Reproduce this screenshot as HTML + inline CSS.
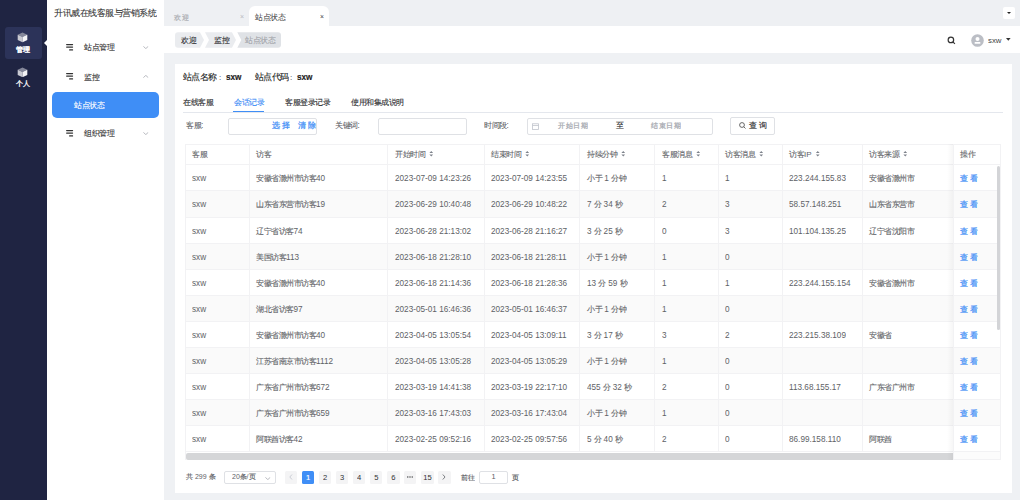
<!DOCTYPE html><html><head><meta charset="utf-8"><style>
*{box-sizing:border-box;margin:0;padding:0}
html,body{width:1020px;height:500px;overflow:hidden;background:#eff1f4;font-family:"Liberation Sans",sans-serif;color:#333}
.a{position:absolute;white-space:nowrap}
.t{position:absolute;white-space:nowrap;line-height:1;transform:scale(0.5);transform-origin:0 0}
.sort{display:inline-block;vertical-align:middle;margin-left:8px;position:relative;top:-1px}
</style></head><body>
<div class="a" style="left:0;top:0;width:47px;height:500px;background:#1f2442"></div>
<div class="a" style="left:4.5px;top:26.5px;width:37px;height:32px;background:#2c3359;border-radius:3px"></div>
<div class="a" style="left:43.8px;top:39.8px;width:0;height:0;border-top:3px solid transparent;border-bottom:3px solid transparent;border-right:3.2px solid #fff"></div>
<svg style="position:absolute;left:17.4px;top:32.3px" width="11" height="10.5" viewBox="0 0 11 10.5">
<path d="M5.5 0.4L10.3 2.7L5.5 5L0.7 2.7Z" fill="#85889a"/>
<path d="M0.7 2.7L5.5 5L5.5 10.2L0.7 7.9Z" fill="#c9cad2"/>
<path d="M10.3 2.7L5.5 5L5.5 10.2L10.3 7.9Z" fill="#f4f4f6"/>
</svg>
<div class="t" style="left:15.9px;top:45.2px;font-size:16.4px;color:#fff;"><span style="font-size:14px;letter-spacing:0.6px;-webkit-text-stroke:0.9px #fff;">管理</span></div>
<svg style="position:absolute;left:17.4px;top:66.6px" width="11" height="10.5" viewBox="0 0 11 10.5">
<path d="M5.5 0.4L10.3 2.7L5.5 5L0.7 2.7Z" fill="#85889a"/>
<path d="M0.7 2.7L5.5 5L5.5 10.2L0.7 7.9Z" fill="#c9cad2"/>
<path d="M10.3 2.7L5.5 5L5.5 10.2L10.3 7.9Z" fill="#f4f4f6"/>
</svg>
<div class="t" style="left:16px;top:79px;font-size:16.4px;color:#fff;"><span style="font-size:14px;letter-spacing:0.6px;-webkit-text-stroke:0.6px #fff;">个人</span></div>
<div class="a" style="left:47px;top:0;width:117px;height:500px;background:#fff"></div>
<div class="t" style="left:54.2px;top:9px;font-size:16.4px;color:#333;"><span style="font-size:17.0px;letter-spacing:0px;-webkit-text-stroke:0.16px #333;">升讯威在线客服与营销系统</span></div>
<svg style="position:absolute;left:65.5px;top:43.8px" width="8" height="7" viewBox="0 0 8 7">
<path d="M0.6 0.6H6.6M0.6 3.1H6.6M3.6 5.9H6.6" stroke="#333" stroke-width="1.1" stroke-linecap="round"/>
</svg>
<div class="t" style="left:83.8px;top:42.5px;font-size:16.4px;color:#333;"><span style="font-size:15.0px;letter-spacing:0px;-webkit-text-stroke:0.2px #333;">站点管理</span></div>
<svg style="position:absolute;left:142.5px;top:45.8px" width="6" height="3.2" viewBox="0 0 6 3.2"><path d="M0.4 0.4L2.8 2.6L5.2 0.4" fill="none" stroke="#a0a3aa" stroke-width="0.75"/></svg>
<svg style="position:absolute;left:65.5px;top:73.3px" width="8" height="7" viewBox="0 0 8 7">
<path d="M0.6 0.6H6.6M0.6 3.1H6.6M3.6 5.9H6.6" stroke="#333" stroke-width="1.1" stroke-linecap="round"/>
</svg>
<div class="t" style="left:84px;top:72.5px;font-size:16.4px;color:#333;"><span style="font-size:15.0px;letter-spacing:0px;-webkit-text-stroke:0.2px #333;">监控</span></div>
<svg style="position:absolute;left:142.5px;top:75px" width="6" height="3.2" viewBox="0 0 6 3.2"><path d="M0.4 2.6L2.8 0.4L5.2 2.6" fill="none" stroke="#a0a3aa" stroke-width="0.75"/></svg>
<div class="a" style="left:52px;top:91.5px;width:107px;height:26.3px;background:#3f8ef6;border-radius:5px"></div>
<div class="t" style="left:73.6px;top:100.8px;font-size:16.4px;color:#fff;"><span style="font-size:15.0px;letter-spacing:0px;-webkit-text-stroke:0.2px #fff;">站点状态</span></div>
<svg style="position:absolute;left:65.5px;top:129.5px" width="8" height="7" viewBox="0 0 8 7">
<path d="M0.6 0.6H6.6M0.6 3.1H6.6M3.6 5.9H6.6" stroke="#333" stroke-width="1.1" stroke-linecap="round"/>
</svg>
<div class="t" style="left:84px;top:128.5px;font-size:16.4px;color:#333;"><span style="font-size:15.0px;letter-spacing:0px;-webkit-text-stroke:0.2px #333;">组织管理</span></div>
<svg style="position:absolute;left:142.5px;top:132px" width="6" height="3.2" viewBox="0 0 6 3.2"><path d="M0.4 0.4L2.8 2.6L5.2 0.4" fill="none" stroke="#a0a3aa" stroke-width="0.75"/></svg>
<div class="a" style="left:164px;top:0;width:856px;height:26px;background:#eef0f3"></div>
<div class="t" style="left:174px;top:12.8px;font-size:16.4px;color:#aeb0b5;"><span style="font-size:14px;letter-spacing:1.0px;-webkit-text-stroke:0.5px #aeb0b5;">欢迎</span></div>
<div class="t" style="left:240.2px;top:13px;font-size:14px;color:#b8bac0;">×</div>
<div class="a" style="left:248.6px;top:6px;width:80.8px;height:21px;background:#fff;border-radius:6px 6px 0 0"></div>
<div class="t" style="left:255.3px;top:12.8px;font-size:16.4px;color:#4a4a4a;"><span style="font-size:15.0px;letter-spacing:0px;-webkit-text-stroke:0.1px #4a4a4a;">站点状态</span></div>
<div class="t" style="left:319.6px;top:13.4px;font-size:13.6px;color:#444;">×</div>
<div class="a" style="left:1003px;top:7px;width:12px;height:12px;background:#fff;border-radius:2px"></div>
<div class="a" style="left:1007px;top:12.3px;width:0;height:0;border-left:2.2px solid transparent;border-right:2.2px solid transparent;border-top:2.4px solid #222"></div>
<div class="a" style="left:164px;top:26px;width:856px;height:27px;background:#fff"></div>
<svg class="a" style="left:174.7px;top:32.1px" width="110" height="16" viewBox="0 0 110 15.3"><path d="M3 0H25L29 7.65L25 15.3H3Q0 15.3 0 12.3V3Q0 0 3 0Z" fill="#eaecef"/><path d="M30 0H57L61 7.65L57 15.3H30L34 7.65Z" fill="#eaecef"/><path d="M62.3 0H103Q106 0 106 3V12.3Q106 15.3 103 15.3H62.3L66.3 7.65Z" fill="#dfe2e6"/></svg>
<div class="t" style="left:180.8px;top:35.8px;font-size:16.4px;color:#303133;"><span style="font-size:15.0px;letter-spacing:0px;-webkit-text-stroke:0.2px #303133;">欢迎</span></div>
<div class="t" style="left:213.5px;top:35.8px;font-size:16.4px;color:#303133;"><span style="font-size:15.0px;letter-spacing:0px;-webkit-text-stroke:0.2px #303133;">监控</span></div>
<div class="t" style="left:245.3px;top:35.8px;font-size:16.4px;color:#a3a5aa;"><span style="font-size:15.0px;letter-spacing:0px;-webkit-text-stroke:0.2px #a3a5aa;">站点状态</span></div>
<svg class="a" style="left:947px;top:36px" width="9" height="9" viewBox="0 0 9 9"><circle cx="3.9" cy="3.9" r="2.75" fill="none" stroke="#333" stroke-width="1.2"/><path d="M5.9 5.9L7.9 7.9" stroke="#333" stroke-width="1.2"/></svg>
<svg class="a" style="left:971px;top:33.6px" width="13" height="13" viewBox="0 0 13 13"><circle cx="6.5" cy="6.5" r="6.3" fill="#bbbec5"/><circle cx="6.5" cy="4.9" r="2" fill="#fff"/><rect x="3.6" y="7.9" width="5.8" height="1.9" rx="0.6" fill="#fff"/></svg>
<div class="t" style="left:988.4px;top:35.8px;font-size:15.6px;color:#444;">sxw</div>
<svg class="a" style="left:1005.5px;top:38.2px" width="5" height="3" viewBox="0 0 5 3"><path d="M0 0H4.6L2.3 2.7Z" fill="#333"/></svg>
<div class="a" style="left:175px;top:64px;width:836.5px;height:428.5px;background:#fff"></div>
<div class="t" style="left:183.2px;top:73.2px;font-size:16px;color:#222;"><span style="font-size:17.0px;letter-spacing:-0.4px;-webkit-text-stroke:0.2px #222;">站点名称</span></div>
<div class="t" style="left:218.6px;top:73.2px;font-size:16px;color:#333;">:</div>
<div class="t" style="left:225.6px;top:72.9px;font-size:16.4px;color:#222;-webkit-text-stroke:0.3px #222;"><b>sxw</b></div>
<div class="t" style="left:254.6px;top:73.2px;font-size:16px;color:#222;"><span style="font-size:17.0px;letter-spacing:-0.4px;-webkit-text-stroke:0.2px #222;">站点代码</span></div>
<div class="t" style="left:290px;top:73.2px;font-size:16px;color:#333;">:</div>
<div class="t" style="left:297.0px;top:72.9px;font-size:16.4px;color:#222;-webkit-text-stroke:0.3px #222;"><b>sxw</b></div>
<div class="t" style="left:183px;top:97.5px;font-size:16.4px;color:#303133;"><span style="font-size:15.0px;letter-spacing:0px;-webkit-text-stroke:0.24px #303133;">在线客服</span></div>
<div class="t" style="left:234px;top:97.5px;font-size:16.4px;color:#3f8ef6;"><span style="font-size:15.0px;letter-spacing:0px;-webkit-text-stroke:0.24px #3f8ef6;">会话记录</span></div>
<div class="t" style="left:285.4px;top:97.5px;font-size:16.4px;color:#303133;"><span style="font-size:15.0px;letter-spacing:0px;-webkit-text-stroke:0.24px #303133;">客服登录记录</span></div>
<div class="t" style="left:351px;top:97.5px;font-size:16.4px;color:#303133;"><span style="font-size:15.0px;letter-spacing:0px;-webkit-text-stroke:0.24px #303133;">使用和集成说明</span></div>
<div class="a" style="left:183px;top:111.6px;width:820px;height:1px;background:#e4e7ed"></div>
<div class="a" style="left:232.6px;top:111px;width:31.5px;height:1.3px;background:#3f8ef6"></div>
<div class="t" style="left:185.5px;top:121px;font-size:16.4px;color:#606266;"><span style="font-size:15.0px;letter-spacing:0px;-webkit-text-stroke:0.16px #606266;">客服</span>:</div>
<div class="a" style="left:228.3px;top:117.5px;width:89.2px;height:17px;border:1px solid #dfe1e5;border-radius:2px"></div>
<div class="t" style="left:272px;top:120.8px;font-size:16.4px;color:#3f8ef6;"><span style="font-size:15.0px;letter-spacing:0px;-webkit-text-stroke:0.5px #3f8ef6;">选</span> <span style="font-size:15.0px;letter-spacing:0px;-webkit-text-stroke:0.5px #3f8ef6;">择</span></div>
<div class="t" style="left:297.6px;top:120.8px;font-size:16.4px;color:#3f8ef6;"><span style="font-size:15.0px;letter-spacing:0px;-webkit-text-stroke:0.5px #3f8ef6;">清</span> <span style="font-size:15.0px;letter-spacing:0px;-webkit-text-stroke:0.5px #3f8ef6;">除</span></div>
<div class="t" style="left:334.6px;top:121px;font-size:16.4px;color:#606266;"><span style="font-size:15.0px;letter-spacing:0px;-webkit-text-stroke:0.16px #606266;">关键词</span>:</div>
<div class="a" style="left:378px;top:117.5px;width:89px;height:17px;border:1px solid #dfe1e5;border-radius:2px"></div>
<div class="t" style="left:484px;top:121px;font-size:16.4px;color:#606266;"><span style="font-size:15.0px;letter-spacing:0px;-webkit-text-stroke:0.16px #606266;">时间段</span>:</div>
<div class="a" style="left:526.6px;top:117.5px;width:186px;height:17px;border:1px solid #dfe1e5;border-radius:2px"></div>
<svg class="a" style="left:532px;top:122.5px" width="7" height="7" viewBox="0 0 7 7"><rect x="0.5" y="0.8" width="6" height="5.7" fill="none" stroke="#c0c4cc" stroke-width="0.8"/><path d="M0.5 2.5H6.5" stroke="#c0c4cc" stroke-width="0.8"/></svg>
<div class="t" style="left:558.4px;top:121px;font-size:16.4px;color:#a8abb2;"><span style="font-size:14px;letter-spacing:1.0px;-webkit-text-stroke:0.5px #a8abb2;">开始日期</span></div>
<div class="t" style="left:615.8px;top:121px;font-size:16.4px;color:#303133;"><span style="font-size:15.0px;letter-spacing:0px;-webkit-text-stroke:0.2px #303133;">至</span></div>
<div class="t" style="left:651px;top:121px;font-size:16.4px;color:#a8abb2;"><span style="font-size:14px;letter-spacing:1.0px;-webkit-text-stroke:0.5px #a8abb2;">结束日期</span></div>
<div class="a" style="left:730.4px;top:117.4px;width:44.2px;height:17.7px;border:1px solid #dfe1e5;border-radius:2px"></div>
<svg class="a" style="left:739px;top:122.3px" width="7" height="7" viewBox="0 0 7 7"><circle cx="3" cy="3" r="2.4" fill="none" stroke="#444" stroke-width="0.8"/><path d="M4.8 4.8L6.5 6.5" stroke="#444" stroke-width="0.8"/></svg>
<div class="t" style="left:749px;top:120.8px;font-size:16.4px;color:#303133;"><span style="font-size:15.0px;letter-spacing:0px;-webkit-text-stroke:0.3px #303133;">查</span> <span style="font-size:15.0px;letter-spacing:0px;-webkit-text-stroke:0.3px #303133;">询</span></div>
<div class="a" style="left:185px;top:144px;width:815.5px;height:20.8px;background:#fff"></div>
<div class="a" style="left:185px;top:164.80px;width:815.5px;height:26.1px;background:#fff"></div>
<div class="a" style="left:185px;top:190.90px;width:815.5px;height:26.1px;background:#fafafa"></div>
<div class="a" style="left:185px;top:217.00px;width:815.5px;height:26.1px;background:#fff"></div>
<div class="a" style="left:185px;top:243.10px;width:815.5px;height:26.1px;background:#fafafa"></div>
<div class="a" style="left:185px;top:269.20px;width:815.5px;height:26.1px;background:#fff"></div>
<div class="a" style="left:185px;top:295.30px;width:815.5px;height:26.1px;background:#fafafa"></div>
<div class="a" style="left:185px;top:321.40px;width:815.5px;height:26.1px;background:#fff"></div>
<div class="a" style="left:185px;top:347.50px;width:815.5px;height:26.1px;background:#fafafa"></div>
<div class="a" style="left:185px;top:373.60px;width:815.5px;height:26.1px;background:#fff"></div>
<div class="a" style="left:185px;top:399.70px;width:815.5px;height:26.1px;background:#fafafa"></div>
<div class="a" style="left:185px;top:425.80px;width:815.5px;height:26.1px;background:#fff"></div>
<div class="a" style="left:185px;top:143.50px;width:815.5px;height:1px;background:#f2f2f4"></div>
<div class="a" style="left:185px;top:164.30px;width:815.5px;height:1px;background:#f2f2f4"></div>
<div class="a" style="left:185px;top:190.40px;width:815.5px;height:1px;background:#f2f2f4"></div>
<div class="a" style="left:185px;top:216.50px;width:815.5px;height:1px;background:#f2f2f4"></div>
<div class="a" style="left:185px;top:242.60px;width:815.5px;height:1px;background:#f2f2f4"></div>
<div class="a" style="left:185px;top:268.70px;width:815.5px;height:1px;background:#f2f2f4"></div>
<div class="a" style="left:185px;top:294.80px;width:815.5px;height:1px;background:#f2f2f4"></div>
<div class="a" style="left:185px;top:320.90px;width:815.5px;height:1px;background:#f2f2f4"></div>
<div class="a" style="left:185px;top:347.00px;width:815.5px;height:1px;background:#f2f2f4"></div>
<div class="a" style="left:185px;top:373.10px;width:815.5px;height:1px;background:#f2f2f4"></div>
<div class="a" style="left:185px;top:399.20px;width:815.5px;height:1px;background:#f2f2f4"></div>
<div class="a" style="left:185px;top:425.30px;width:815.5px;height:1px;background:#f2f2f4"></div>
<div class="a" style="left:185px;top:451.40px;width:815.5px;height:1px;background:#f2f2f4"></div>
<div class="a" style="left:184.5px;top:144px;width:1px;height:307.90000000000003px;background:#f2f2f4"></div>
<div class="a" style="left:248.5px;top:144px;width:1px;height:307.90000000000003px;background:#f2f2f4"></div>
<div class="a" style="left:387.0px;top:144px;width:1px;height:307.90000000000003px;background:#f2f2f4"></div>
<div class="a" style="left:483.5px;top:144px;width:1px;height:307.90000000000003px;background:#f2f2f4"></div>
<div class="a" style="left:579.0px;top:144px;width:1px;height:307.90000000000003px;background:#f2f2f4"></div>
<div class="a" style="left:654.1px;top:144px;width:1px;height:307.90000000000003px;background:#f2f2f4"></div>
<div class="a" style="left:717.6px;top:144px;width:1px;height:307.90000000000003px;background:#f2f2f4"></div>
<div class="a" style="left:781.5px;top:144px;width:1px;height:307.90000000000003px;background:#f2f2f4"></div>
<div class="a" style="left:861.5px;top:144px;width:1px;height:307.90000000000003px;background:#f2f2f4"></div>
<div class="a" style="left:952.5px;top:144px;width:1px;height:307.90000000000003px;background:#f2f2f4"></div>
<div class="a" style="left:1000.0px;top:144px;width:1px;height:307.90000000000003px;background:#f2f2f4"></div>
<div class="t" style="left:192.2px;top:149.6px;font-size:16px;color:#606266;"><span style="font-size:15.0px;letter-spacing:0px;-webkit-text-stroke:0.16px #606266;">客服</span></div>
<div class="t" style="left:256.2px;top:149.6px;font-size:16px;color:#606266;"><span style="font-size:15.0px;letter-spacing:0px;-webkit-text-stroke:0.16px #606266;">访客</span></div>
<div class="t" style="left:394.7px;top:149.6px;font-size:16px;color:#606266;"><span style="font-size:15.0px;letter-spacing:0px;-webkit-text-stroke:0.16px #606266;">开始时间</span><svg class="sort" width="9" height="13" viewBox="0 0 4.5 6.5"><path d="M0.4 2.6L2.25 0.6L4.1 2.6Z M0.4 3.9L2.25 5.9L4.1 3.9Z" fill="#7d828b"/></svg></div>
<div class="t" style="left:491.2px;top:149.6px;font-size:16px;color:#606266;"><span style="font-size:15.0px;letter-spacing:0px;-webkit-text-stroke:0.16px #606266;">结束时间</span><svg class="sort" width="9" height="13" viewBox="0 0 4.5 6.5"><path d="M0.4 2.6L2.25 0.6L4.1 2.6Z M0.4 3.9L2.25 5.9L4.1 3.9Z" fill="#7d828b"/></svg></div>
<div class="t" style="left:586.7px;top:149.6px;font-size:16px;color:#606266;"><span style="font-size:15.0px;letter-spacing:0px;-webkit-text-stroke:0.16px #606266;">持续分钟</span><svg class="sort" width="9" height="13" viewBox="0 0 4.5 6.5"><path d="M0.4 2.6L2.25 0.6L4.1 2.6Z M0.4 3.9L2.25 5.9L4.1 3.9Z" fill="#7d828b"/></svg></div>
<div class="t" style="left:661.8px;top:149.6px;font-size:16px;color:#606266;"><span style="font-size:15.0px;letter-spacing:0px;-webkit-text-stroke:0.16px #606266;">客服消息</span><svg class="sort" width="9" height="13" viewBox="0 0 4.5 6.5"><path d="M0.4 2.6L2.25 0.6L4.1 2.6Z M0.4 3.9L2.25 5.9L4.1 3.9Z" fill="#7d828b"/></svg></div>
<div class="t" style="left:725.3px;top:149.6px;font-size:16px;color:#606266;"><span style="font-size:15.0px;letter-spacing:0px;-webkit-text-stroke:0.16px #606266;">访客消息</span><svg class="sort" width="9" height="13" viewBox="0 0 4.5 6.5"><path d="M0.4 2.6L2.25 0.6L4.1 2.6Z M0.4 3.9L2.25 5.9L4.1 3.9Z" fill="#7d828b"/></svg></div>
<div class="t" style="left:789.2px;top:149.6px;font-size:16px;color:#606266;"><span style="font-size:15.0px;letter-spacing:0px;-webkit-text-stroke:0.16px #606266;">访客</span>IP<svg class="sort" width="9" height="13" viewBox="0 0 4.5 6.5"><path d="M0.4 2.6L2.25 0.6L4.1 2.6Z M0.4 3.9L2.25 5.9L4.1 3.9Z" fill="#7d828b"/></svg></div>
<div class="t" style="left:869.2px;top:149.6px;font-size:16px;color:#606266;"><span style="font-size:15.0px;letter-spacing:0px;-webkit-text-stroke:0.16px #606266;">访客来源</span><svg class="sort" width="9" height="13" viewBox="0 0 4.5 6.5"><path d="M0.4 2.6L2.25 0.6L4.1 2.6Z M0.4 3.9L2.25 5.9L4.1 3.9Z" fill="#7d828b"/></svg></div>
<div class="t" style="left:960.2px;top:149.6px;font-size:16px;color:#606266;"><span style="font-size:15.0px;letter-spacing:0px;-webkit-text-stroke:0.16px #606266;">操作</span></div>
<div class="t" style="left:192.2px;top:174.3px;font-size:16.4px;color:#606266;">sxw</div>
<div class="t" style="left:256.2px;top:174.3px;font-size:16.4px;color:#606266;"><span style="font-size:15.0px;letter-spacing:0px;-webkit-text-stroke:0.2px #606266;">安徽省滁州市访客</span>40</div>
<div class="t" style="left:394.7px;top:174.3px;font-size:16.4px;color:#606266;">2023-07-09 14:23:26</div>
<div class="t" style="left:491.2px;top:174.3px;font-size:16.4px;color:#606266;">2023-07-09 14:23:55</div>
<div class="t" style="left:586.7px;top:174.3px;font-size:16.4px;color:#606266;"><span style="font-size:15.0px;letter-spacing:0px;-webkit-text-stroke:0.2px #606266;">小于</span> 1 <span style="font-size:15.0px;letter-spacing:0px;-webkit-text-stroke:0.2px #606266;">分钟</span></div>
<div class="t" style="left:661.8px;top:174.3px;font-size:16.4px;color:#606266;">1</div>
<div class="t" style="left:725.3px;top:174.3px;font-size:16.4px;color:#606266;">1</div>
<div class="t" style="left:789.2px;top:174.3px;font-size:16.4px;color:#606266;">223.244.155.83</div>
<div class="t" style="left:869.2px;top:174.3px;font-size:16.4px;color:#606266;"><span style="font-size:15.0px;letter-spacing:0px;-webkit-text-stroke:0.2px #606266;">安徽省滁州市</span></div>
<div class="t" style="left:960.2px;top:174.3px;font-size:16.4px;color:#3f8ef6;"><span style="font-size:15.0px;letter-spacing:0px;-webkit-text-stroke:0.4px #3f8ef6;">查</span> <span style="font-size:15.0px;letter-spacing:0px;-webkit-text-stroke:0.4px #3f8ef6;">看</span></div>
<div class="t" style="left:192.2px;top:200.4px;font-size:16.4px;color:#606266;">sxw</div>
<div class="t" style="left:256.2px;top:200.4px;font-size:16.4px;color:#606266;"><span style="font-size:15.0px;letter-spacing:0px;-webkit-text-stroke:0.2px #606266;">山东省东营市访客</span>19</div>
<div class="t" style="left:394.7px;top:200.4px;font-size:16.4px;color:#606266;">2023-06-29 10:40:48</div>
<div class="t" style="left:491.2px;top:200.4px;font-size:16.4px;color:#606266;">2023-06-29 10:48:22</div>
<div class="t" style="left:586.7px;top:200.4px;font-size:16.4px;color:#606266;">7 <span style="font-size:15.0px;letter-spacing:0px;-webkit-text-stroke:0.2px #606266;">分</span> 34 <span style="font-size:15.0px;letter-spacing:0px;-webkit-text-stroke:0.2px #606266;">秒</span></div>
<div class="t" style="left:661.8px;top:200.4px;font-size:16.4px;color:#606266;">2</div>
<div class="t" style="left:725.3px;top:200.4px;font-size:16.4px;color:#606266;">3</div>
<div class="t" style="left:789.2px;top:200.4px;font-size:16.4px;color:#606266;">58.57.148.251</div>
<div class="t" style="left:869.2px;top:200.4px;font-size:16.4px;color:#606266;"><span style="font-size:15.0px;letter-spacing:0px;-webkit-text-stroke:0.2px #606266;">山东省东营市</span></div>
<div class="t" style="left:960.2px;top:200.4px;font-size:16.4px;color:#3f8ef6;"><span style="font-size:15.0px;letter-spacing:0px;-webkit-text-stroke:0.4px #3f8ef6;">查</span> <span style="font-size:15.0px;letter-spacing:0px;-webkit-text-stroke:0.4px #3f8ef6;">看</span></div>
<div class="t" style="left:192.2px;top:226.5px;font-size:16.4px;color:#606266;">sxw</div>
<div class="t" style="left:256.2px;top:226.5px;font-size:16.4px;color:#606266;"><span style="font-size:15.0px;letter-spacing:0px;-webkit-text-stroke:0.2px #606266;">辽宁省访客</span>74</div>
<div class="t" style="left:394.7px;top:226.5px;font-size:16.4px;color:#606266;">2023-06-28 21:13:02</div>
<div class="t" style="left:491.2px;top:226.5px;font-size:16.4px;color:#606266;">2023-06-28 21:16:27</div>
<div class="t" style="left:586.7px;top:226.5px;font-size:16.4px;color:#606266;">3 <span style="font-size:15.0px;letter-spacing:0px;-webkit-text-stroke:0.2px #606266;">分</span> 25 <span style="font-size:15.0px;letter-spacing:0px;-webkit-text-stroke:0.2px #606266;">秒</span></div>
<div class="t" style="left:661.8px;top:226.5px;font-size:16.4px;color:#606266;">0</div>
<div class="t" style="left:725.3px;top:226.5px;font-size:16.4px;color:#606266;">3</div>
<div class="t" style="left:789.2px;top:226.5px;font-size:16.4px;color:#606266;">101.104.135.25</div>
<div class="t" style="left:869.2px;top:226.5px;font-size:16.4px;color:#606266;"><span style="font-size:15.0px;letter-spacing:0px;-webkit-text-stroke:0.2px #606266;">辽宁省沈阳市</span></div>
<div class="t" style="left:960.2px;top:226.5px;font-size:16.4px;color:#3f8ef6;"><span style="font-size:15.0px;letter-spacing:0px;-webkit-text-stroke:0.4px #3f8ef6;">查</span> <span style="font-size:15.0px;letter-spacing:0px;-webkit-text-stroke:0.4px #3f8ef6;">看</span></div>
<div class="t" style="left:192.2px;top:252.6px;font-size:16.4px;color:#606266;">sxw</div>
<div class="t" style="left:256.2px;top:252.6px;font-size:16.4px;color:#606266;"><span style="font-size:15.0px;letter-spacing:0px;-webkit-text-stroke:0.2px #606266;">美国访客</span>113</div>
<div class="t" style="left:394.7px;top:252.6px;font-size:16.4px;color:#606266;">2023-06-18 21:28:10</div>
<div class="t" style="left:491.2px;top:252.6px;font-size:16.4px;color:#606266;">2023-06-18 21:28:11</div>
<div class="t" style="left:586.7px;top:252.6px;font-size:16.4px;color:#606266;"><span style="font-size:15.0px;letter-spacing:0px;-webkit-text-stroke:0.2px #606266;">小于</span> 1 <span style="font-size:15.0px;letter-spacing:0px;-webkit-text-stroke:0.2px #606266;">分钟</span></div>
<div class="t" style="left:661.8px;top:252.6px;font-size:16.4px;color:#606266;">1</div>
<div class="t" style="left:725.3px;top:252.6px;font-size:16.4px;color:#606266;">0</div>
<div class="t" style="left:789.2px;top:252.6px;font-size:16.4px;color:#606266;"></div>
<div class="t" style="left:869.2px;top:252.6px;font-size:16.4px;color:#606266;"></div>
<div class="t" style="left:960.2px;top:252.6px;font-size:16.4px;color:#3f8ef6;"><span style="font-size:15.0px;letter-spacing:0px;-webkit-text-stroke:0.4px #3f8ef6;">查</span> <span style="font-size:15.0px;letter-spacing:0px;-webkit-text-stroke:0.4px #3f8ef6;">看</span></div>
<div class="t" style="left:192.2px;top:278.7px;font-size:16.4px;color:#606266;">sxw</div>
<div class="t" style="left:256.2px;top:278.7px;font-size:16.4px;color:#606266;"><span style="font-size:15.0px;letter-spacing:0px;-webkit-text-stroke:0.2px #606266;">安徽省滁州市访客</span>40</div>
<div class="t" style="left:394.7px;top:278.7px;font-size:16.4px;color:#606266;">2023-06-18 21:14:36</div>
<div class="t" style="left:491.2px;top:278.7px;font-size:16.4px;color:#606266;">2023-06-18 21:28:36</div>
<div class="t" style="left:586.7px;top:278.7px;font-size:16.4px;color:#606266;">13 <span style="font-size:15.0px;letter-spacing:0px;-webkit-text-stroke:0.2px #606266;">分</span> 59 <span style="font-size:15.0px;letter-spacing:0px;-webkit-text-stroke:0.2px #606266;">秒</span></div>
<div class="t" style="left:661.8px;top:278.7px;font-size:16.4px;color:#606266;">1</div>
<div class="t" style="left:725.3px;top:278.7px;font-size:16.4px;color:#606266;">1</div>
<div class="t" style="left:789.2px;top:278.7px;font-size:16.4px;color:#606266;">223.244.155.154</div>
<div class="t" style="left:869.2px;top:278.7px;font-size:16.4px;color:#606266;"><span style="font-size:15.0px;letter-spacing:0px;-webkit-text-stroke:0.2px #606266;">安徽省滁州市</span></div>
<div class="t" style="left:960.2px;top:278.7px;font-size:16.4px;color:#3f8ef6;"><span style="font-size:15.0px;letter-spacing:0px;-webkit-text-stroke:0.4px #3f8ef6;">查</span> <span style="font-size:15.0px;letter-spacing:0px;-webkit-text-stroke:0.4px #3f8ef6;">看</span></div>
<div class="t" style="left:192.2px;top:304.8px;font-size:16.4px;color:#606266;">sxw</div>
<div class="t" style="left:256.2px;top:304.8px;font-size:16.4px;color:#606266;"><span style="font-size:15.0px;letter-spacing:0px;-webkit-text-stroke:0.2px #606266;">湖北省访客</span>97</div>
<div class="t" style="left:394.7px;top:304.8px;font-size:16.4px;color:#606266;">2023-05-01 16:46:36</div>
<div class="t" style="left:491.2px;top:304.8px;font-size:16.4px;color:#606266;">2023-05-01 16:46:37</div>
<div class="t" style="left:586.7px;top:304.8px;font-size:16.4px;color:#606266;"><span style="font-size:15.0px;letter-spacing:0px;-webkit-text-stroke:0.2px #606266;">小于</span> 1 <span style="font-size:15.0px;letter-spacing:0px;-webkit-text-stroke:0.2px #606266;">分钟</span></div>
<div class="t" style="left:661.8px;top:304.8px;font-size:16.4px;color:#606266;">1</div>
<div class="t" style="left:725.3px;top:304.8px;font-size:16.4px;color:#606266;">0</div>
<div class="t" style="left:789.2px;top:304.8px;font-size:16.4px;color:#606266;"></div>
<div class="t" style="left:869.2px;top:304.8px;font-size:16.4px;color:#606266;"></div>
<div class="t" style="left:960.2px;top:304.8px;font-size:16.4px;color:#3f8ef6;"><span style="font-size:15.0px;letter-spacing:0px;-webkit-text-stroke:0.4px #3f8ef6;">查</span> <span style="font-size:15.0px;letter-spacing:0px;-webkit-text-stroke:0.4px #3f8ef6;">看</span></div>
<div class="t" style="left:192.2px;top:330.9px;font-size:16.4px;color:#606266;">sxw</div>
<div class="t" style="left:256.2px;top:330.9px;font-size:16.4px;color:#606266;"><span style="font-size:15.0px;letter-spacing:0px;-webkit-text-stroke:0.2px #606266;">安徽省滁州市访客</span>40</div>
<div class="t" style="left:394.7px;top:330.9px;font-size:16.4px;color:#606266;">2023-04-05 13:05:54</div>
<div class="t" style="left:491.2px;top:330.9px;font-size:16.4px;color:#606266;">2023-04-05 13:09:11</div>
<div class="t" style="left:586.7px;top:330.9px;font-size:16.4px;color:#606266;">3 <span style="font-size:15.0px;letter-spacing:0px;-webkit-text-stroke:0.2px #606266;">分</span> 17 <span style="font-size:15.0px;letter-spacing:0px;-webkit-text-stroke:0.2px #606266;">秒</span></div>
<div class="t" style="left:661.8px;top:330.9px;font-size:16.4px;color:#606266;">3</div>
<div class="t" style="left:725.3px;top:330.9px;font-size:16.4px;color:#606266;">2</div>
<div class="t" style="left:789.2px;top:330.9px;font-size:16.4px;color:#606266;">223.215.38.109</div>
<div class="t" style="left:869.2px;top:330.9px;font-size:16.4px;color:#606266;"><span style="font-size:15.0px;letter-spacing:0px;-webkit-text-stroke:0.2px #606266;">安徽省</span></div>
<div class="t" style="left:960.2px;top:330.9px;font-size:16.4px;color:#3f8ef6;"><span style="font-size:15.0px;letter-spacing:0px;-webkit-text-stroke:0.4px #3f8ef6;">查</span> <span style="font-size:15.0px;letter-spacing:0px;-webkit-text-stroke:0.4px #3f8ef6;">看</span></div>
<div class="t" style="left:192.2px;top:357.0px;font-size:16.4px;color:#606266;">sxw</div>
<div class="t" style="left:256.2px;top:357.0px;font-size:16.4px;color:#606266;"><span style="font-size:15.0px;letter-spacing:0px;-webkit-text-stroke:0.2px #606266;">江苏省南京市访客</span>1112</div>
<div class="t" style="left:394.7px;top:357.0px;font-size:16.4px;color:#606266;">2023-04-05 13:05:28</div>
<div class="t" style="left:491.2px;top:357.0px;font-size:16.4px;color:#606266;">2023-04-05 13:05:29</div>
<div class="t" style="left:586.7px;top:357.0px;font-size:16.4px;color:#606266;"><span style="font-size:15.0px;letter-spacing:0px;-webkit-text-stroke:0.2px #606266;">小于</span> 1 <span style="font-size:15.0px;letter-spacing:0px;-webkit-text-stroke:0.2px #606266;">分钟</span></div>
<div class="t" style="left:661.8px;top:357.0px;font-size:16.4px;color:#606266;">1</div>
<div class="t" style="left:725.3px;top:357.0px;font-size:16.4px;color:#606266;">0</div>
<div class="t" style="left:789.2px;top:357.0px;font-size:16.4px;color:#606266;"></div>
<div class="t" style="left:869.2px;top:357.0px;font-size:16.4px;color:#606266;"></div>
<div class="t" style="left:960.2px;top:357.0px;font-size:16.4px;color:#3f8ef6;"><span style="font-size:15.0px;letter-spacing:0px;-webkit-text-stroke:0.4px #3f8ef6;">查</span> <span style="font-size:15.0px;letter-spacing:0px;-webkit-text-stroke:0.4px #3f8ef6;">看</span></div>
<div class="t" style="left:192.2px;top:383.1px;font-size:16.4px;color:#606266;">sxw</div>
<div class="t" style="left:256.2px;top:383.1px;font-size:16.4px;color:#606266;"><span style="font-size:15.0px;letter-spacing:0px;-webkit-text-stroke:0.2px #606266;">广东省广州市访客</span>672</div>
<div class="t" style="left:394.7px;top:383.1px;font-size:16.4px;color:#606266;">2023-03-19 14:41:38</div>
<div class="t" style="left:491.2px;top:383.1px;font-size:16.4px;color:#606266;">2023-03-19 22:17:10</div>
<div class="t" style="left:586.7px;top:383.1px;font-size:16.4px;color:#606266;">455 <span style="font-size:15.0px;letter-spacing:0px;-webkit-text-stroke:0.2px #606266;">分</span> 32 <span style="font-size:15.0px;letter-spacing:0px;-webkit-text-stroke:0.2px #606266;">秒</span></div>
<div class="t" style="left:661.8px;top:383.1px;font-size:16.4px;color:#606266;">2</div>
<div class="t" style="left:725.3px;top:383.1px;font-size:16.4px;color:#606266;">0</div>
<div class="t" style="left:789.2px;top:383.1px;font-size:16.4px;color:#606266;">113.68.155.17</div>
<div class="t" style="left:869.2px;top:383.1px;font-size:16.4px;color:#606266;"><span style="font-size:15.0px;letter-spacing:0px;-webkit-text-stroke:0.2px #606266;">广东省广州市</span></div>
<div class="t" style="left:960.2px;top:383.1px;font-size:16.4px;color:#3f8ef6;"><span style="font-size:15.0px;letter-spacing:0px;-webkit-text-stroke:0.4px #3f8ef6;">查</span> <span style="font-size:15.0px;letter-spacing:0px;-webkit-text-stroke:0.4px #3f8ef6;">看</span></div>
<div class="t" style="left:192.2px;top:409.2px;font-size:16.4px;color:#606266;">sxw</div>
<div class="t" style="left:256.2px;top:409.2px;font-size:16.4px;color:#606266;"><span style="font-size:15.0px;letter-spacing:0px;-webkit-text-stroke:0.2px #606266;">广东省广州市访客</span>659</div>
<div class="t" style="left:394.7px;top:409.2px;font-size:16.4px;color:#606266;">2023-03-16 17:43:03</div>
<div class="t" style="left:491.2px;top:409.2px;font-size:16.4px;color:#606266;">2023-03-16 17:43:04</div>
<div class="t" style="left:586.7px;top:409.2px;font-size:16.4px;color:#606266;"><span style="font-size:15.0px;letter-spacing:0px;-webkit-text-stroke:0.2px #606266;">小于</span> 1 <span style="font-size:15.0px;letter-spacing:0px;-webkit-text-stroke:0.2px #606266;">分钟</span></div>
<div class="t" style="left:661.8px;top:409.2px;font-size:16.4px;color:#606266;">1</div>
<div class="t" style="left:725.3px;top:409.2px;font-size:16.4px;color:#606266;">0</div>
<div class="t" style="left:789.2px;top:409.2px;font-size:16.4px;color:#606266;"></div>
<div class="t" style="left:869.2px;top:409.2px;font-size:16.4px;color:#606266;"></div>
<div class="t" style="left:960.2px;top:409.2px;font-size:16.4px;color:#3f8ef6;"><span style="font-size:15.0px;letter-spacing:0px;-webkit-text-stroke:0.4px #3f8ef6;">查</span> <span style="font-size:15.0px;letter-spacing:0px;-webkit-text-stroke:0.4px #3f8ef6;">看</span></div>
<div class="t" style="left:192.2px;top:435.3px;font-size:16.4px;color:#606266;">sxw</div>
<div class="t" style="left:256.2px;top:435.3px;font-size:16.4px;color:#606266;"><span style="font-size:15.0px;letter-spacing:0px;-webkit-text-stroke:0.2px #606266;">阿联酋访客</span>42</div>
<div class="t" style="left:394.7px;top:435.3px;font-size:16.4px;color:#606266;">2023-02-25 09:52:16</div>
<div class="t" style="left:491.2px;top:435.3px;font-size:16.4px;color:#606266;">2023-02-25 09:57:56</div>
<div class="t" style="left:586.7px;top:435.3px;font-size:16.4px;color:#606266;">5 <span style="font-size:15.0px;letter-spacing:0px;-webkit-text-stroke:0.2px #606266;">分</span> 40 <span style="font-size:15.0px;letter-spacing:0px;-webkit-text-stroke:0.2px #606266;">秒</span></div>
<div class="t" style="left:661.8px;top:435.3px;font-size:16.4px;color:#606266;">2</div>
<div class="t" style="left:725.3px;top:435.3px;font-size:16.4px;color:#606266;">0</div>
<div class="t" style="left:789.2px;top:435.3px;font-size:16.4px;color:#606266;">86.99.158.110</div>
<div class="t" style="left:869.2px;top:435.3px;font-size:16.4px;color:#606266;"><span style="font-size:15.0px;letter-spacing:0px;-webkit-text-stroke:0.2px #606266;">阿联酋</span></div>
<div class="t" style="left:960.2px;top:435.3px;font-size:16.4px;color:#3f8ef6;"><span style="font-size:15.0px;letter-spacing:0px;-webkit-text-stroke:0.4px #3f8ef6;">查</span> <span style="font-size:15.0px;letter-spacing:0px;-webkit-text-stroke:0.4px #3f8ef6;">看</span></div>
<div class="a" style="left:184.5px;top:451.90px;width:1px;height:8.5px;background:#f2f2f4"></div>
<div class="a" style="left:186.2px;top:452.60px;width:766.8px;height:7px;background:#d5d6d8;border-radius:2px 0 0 2px"></div>
<div class="a" style="left:952.5px;top:451.90px;width:48.5px;height:8.3px;background:#fcfcfc;border-left:1px solid #f2f2f4;border-right:1px solid #f2f2f4;border-bottom:1px solid #f2f2f4"></div>
<div class="a" style="left:946.5px;top:144px;width:6px;height:316.20px;background:linear-gradient(to right,rgba(0,0,0,0),rgba(0,0,0,0.035))"></div>
<div class="a" style="left:996.6px;top:165.5px;width:3.2px;height:164.5px;background:#d3d4d7;border-radius:1.5px"></div>
<div class="t" style="left:185.7px;top:473.3px;font-size:14px;color:#606266;"><span style="font-size:14px;letter-spacing:0px;-webkit-text-stroke:0.3px #606266;">共</span> 299 <span style="font-size:14px;letter-spacing:0px;-webkit-text-stroke:0.3px #606266;">条</span></div>
<div class="a" style="left:223.6px;top:471.2px;width:52px;height:12.5px;border:1px solid #dfe1e5;border-radius:2px"></div>
<div class="t" style="left:232.4px;top:473.2px;font-size:14px;color:#606266;">20<span style="font-size:14px;letter-spacing:-0.4px;-webkit-text-stroke:0.3px #606266;">条</span>/<span style="font-size:14px;letter-spacing:-0.4px;-webkit-text-stroke:0.3px #606266;">页</span></div>
<svg style="position:absolute;left:265px;top:476.5px" width="6" height="3.2" viewBox="0 0 6 3.2"><path d="M0.4 0.4L2.8 2.6L5.2 0.4" fill="none" stroke="#a0a3aa" stroke-width="0.75"/></svg>
<div class="a" style="left:284.9px;top:471px;width:12.3px;height:12.8px;background:#f4f4f5;border-radius:1.5px"></div>
<svg class="a" style="left:289.0px;top:474px" width="4" height="6" viewBox="0 0 4 6"><path d="M3 0.5L0.8 3L3 5.5" fill="none" stroke="#c0c4cc" stroke-width="0.8"/></svg>
<div class="a" style="left:302px;top:471px;width:12.3px;height:12.8px;background:#3f8ef6;border-radius:1.5px"></div>
<div class="t" style="left:302px;top:473px;width:24.6px;text-align:center;font-size:15.2px;color:#fff;-webkit-text-stroke:0.3px #fff;">1</div>
<div class="a" style="left:319.2px;top:471px;width:12.3px;height:12.8px;background:#f4f4f5;border-radius:1.5px"></div>
<div class="t" style="left:319.2px;top:473px;width:24.6px;text-align:center;font-size:15.2px;color:#303133;">2</div>
<div class="a" style="left:335.9px;top:471px;width:12.2px;height:12.8px;background:#f4f4f5;border-radius:1.5px"></div>
<div class="t" style="left:335.9px;top:473px;width:24.4px;text-align:center;font-size:15.2px;color:#303133;">3</div>
<div class="a" style="left:353px;top:471px;width:12.3px;height:12.8px;background:#f4f4f5;border-radius:1.5px"></div>
<div class="t" style="left:353px;top:473px;width:24.6px;text-align:center;font-size:15.2px;color:#303133;">4</div>
<div class="a" style="left:369.7px;top:471px;width:12.8px;height:12.8px;background:#f4f4f5;border-radius:1.5px"></div>
<div class="t" style="left:369.7px;top:473px;width:25.6px;text-align:center;font-size:15.2px;color:#303133;">5</div>
<div class="a" style="left:386.9px;top:471px;width:12.7px;height:12.8px;background:#f4f4f5;border-radius:1.5px"></div>
<div class="t" style="left:386.9px;top:473px;width:25.4px;text-align:center;font-size:15.2px;color:#303133;">6</div>
<div class="a" style="left:404px;top:471px;width:12.3px;height:12.8px;background:#f4f4f5;border-radius:1.5px"></div>
<svg class="a" style="left:407.1px;top:476.4px" width="6" height="2" viewBox="0 0 6 2"><circle cx="0.8" cy="1" r="0.65" fill="#303133"/><circle cx="3" cy="1" r="0.65" fill="#303133"/><circle cx="5.2" cy="1" r="0.65" fill="#303133"/></svg>
<div class="a" style="left:420.9px;top:471px;width:13.0px;height:12.8px;background:#f4f4f5;border-radius:1.5px"></div>
<div class="t" style="left:420.9px;top:473px;width:26.0px;text-align:center;font-size:15.2px;color:#303133;">15</div>
<div class="a" style="left:438px;top:471px;width:12.8px;height:12.8px;background:#f4f4f5;border-radius:1.5px"></div>
<svg class="a" style="left:442.4px;top:474px" width="4" height="6" viewBox="0 0 4 6"><path d="M0.8 0.5L3 3L0.8 5.5" fill="none" stroke="#606266" stroke-width="0.8"/></svg>
<div class="t" style="left:461.4px;top:473.2px;font-size:16.4px;color:#606266;"><span style="font-size:14px;letter-spacing:-0.4px;-webkit-text-stroke:0.3px #606266;">前往</span></div>
<div class="a" style="left:479px;top:471px;width:29px;height:12.8px;border:1px solid #dfe1e5;border-radius:2px"></div>
<div class="t" style="left:479px;top:473px;width:58.0px;text-align:center;font-size:14.8px;color:#606266;">1</div>
<div class="t" style="left:512.4px;top:473.2px;font-size:16.4px;color:#606266;"><span style="font-size:14px;letter-spacing:1.0px;-webkit-text-stroke:0.5px #606266;">页</span></div>
</body></html>
